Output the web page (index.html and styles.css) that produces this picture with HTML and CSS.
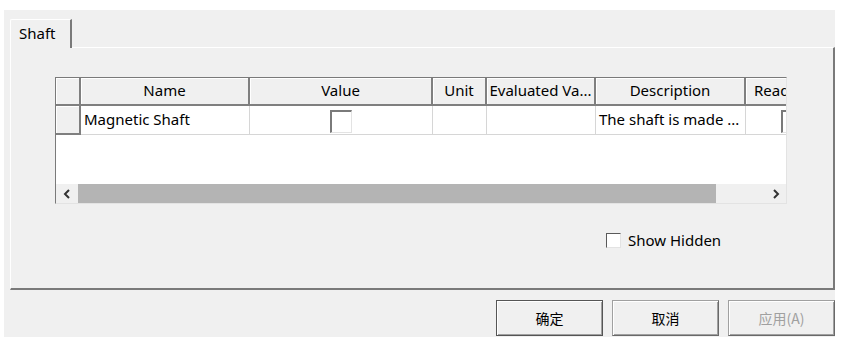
FILE: index.html
```html
<!DOCTYPE html>
<html lang="en">
<head>
  <meta charset="UTF-8" />
  <title>Shaft Properties</title>
  <link rel="stylesheet" href="styles.css">
</head>
<body>
  <div class="window">
    <div class="tab-strip">
      <div class="tab">Shaft</div>
      <div class="tab-fill"></div>
    </div>

    <div class="panel">
      <div class="grid">
        <div class="grid-row grid-head">
          <div class="row-head"></div>
          <div class="head-cell">Name</div>
          <div class="head-cell">Value</div>
          <div class="head-cell">Unit</div>
          <div class="head-cell">Evaluated Va...</div>
          <div class="head-cell">Description</div>
          <div class="head-cell head-clip">Read Only</div>
        </div>
        <div class="grid-row grid-data">
          <div class="row-head"></div>
          <div class="cell">Magnetic Shaft</div>
          <div class="cell cell-center"><span class="cell-check"></span></div>
          <div class="cell"></div>
          <div class="cell"></div>
          <div class="cell">The shaft is made ...</div>
          <div class="cell cell-center"><span class="cell-check"></span></div>
        </div>
        <div class="grid-empty"></div>
        <div class="hscroll">
          <div class="arrow">
            <svg width="8" height="10" viewBox="0 0 8 10"><path d="M6 1 L2 5 L6 9" fill="none" stroke="#333" stroke-width="2"/></svg>
          </div>
          <div class="track"><div class="thumb"></div></div>
          <div class="arrow">
            <svg width="8" height="10" viewBox="0 0 8 10"><path d="M2 1 L6 5 L2 9" fill="none" stroke="#333" stroke-width="2"/></svg>
          </div>
        </div>
      </div>

      <label class="option">
        <span class="check-box"></span>
        <span>Show Hidden</span>
      </label>
    </div>

    <div class="buttons">
      <button class="btn btn-default">确定</button>
      <button class="btn">取消</button>
      <button class="btn" disabled>应用(A)</button>
    </div>
  </div>
</body>
</html>
```

FILE: styles.css
```css
* {
  box-sizing: border-box;
}

body {
  margin: 0;
  background: #fff;
  font-family: "Noto Sans", "Noto Sans CJK SC", sans-serif;
  font-size: 15px;
  color: #000;
}

.window {
  margin: 10px 0 0 4px;
  width: 831px;
  height: 327px;
  padding: 9px 0 0 6px;
  background: #f0f0f0;
}

/* tab header */
.tab-strip {
  display: flex;
  height: 29px;
}

.tab {
  width: 62px;
  padding: 3px 0 0 8px;
  border-top: 1px solid #fff;
  border-left: 1px solid #fff;
  border-right: 2px solid #7a7a7a;
  border-top-left-radius: 2px;
}

.tab-fill {
  flex: 1;
  border-bottom: 1px solid #fff;
  border-right: 2px solid #7a7a7a;
  margin-top: 28px;
}

.panel {
  width: 825px;
  height: 242px;
  padding: 29px 0 0 44px;
  border-left: 1px solid #fff;
  border-right: 2px solid #7a7a7a;
  border-bottom: 2px solid #7a7a7a;
}

/* property grid */
.grid {
  width: 732px;
  height: 127px;
  display: flex;
  flex-direction: column;
  background: #fff;
  border-top: 1px solid #7a7a7a;
  border-left: 1px solid #7a7a7a;
  border-right: 1px solid #e3e3e3;
  border-bottom: 1px solid #e3e3e3;
  overflow: hidden;
}

.grid-row {
  display: grid;
  grid-template-columns: 25px 169px 183px 54px 109px 150px 92px;
  flex-shrink: 0;
}

.grid-head {
  height: 28px;
}

.grid-data {
  height: 29px;
}

.row-head,
.head-cell {
  background: #f0f0f0;
  border-right: 2px solid #7f7f7f;
  border-bottom: 2px solid #7f7f7f;
  box-shadow: inset 1px 1px #fff;
}

.head-cell {
  text-align: center;
  line-height: 25px;
  white-space: nowrap;
  overflow: hidden;
}

.head-clip {
  text-align: left;
  padding-left: 8px;
}

.cell {
  border-right: 1px solid #d6d6d6;
  border-bottom: 1px solid #d6d6d6;
  padding-left: 3px;
  line-height: 27px;
  white-space: nowrap;
  overflow: hidden;
}

.cell-center {
  display: flex;
  justify-content: center;
  align-items: center;
  padding-left: 0;
}

.cell-check {
  width: 22px;
  height: 23px;
  margin-top: 3px;
  background: #fff;
  border-top: 2px solid #7a7a7a;
  border-left: 2px solid #7a7a7a;
  border-right: 1px solid #e3e3e3;
  border-bottom: 1px solid #e3e3e3;
}

.grid-empty {
  flex: 1;
}

.hscroll {
  height: 19px;
  display: flex;
  background: #f0f0f0;
  flex-shrink: 0;
}

.arrow {
  width: 21px;
  display: flex;
  align-items: center;
  justify-content: center;
}

.track {
  flex: 1;
  padding: 0 49px 0 1px;
}

.thumb {
  height: 100%;
  background: #b4b4b4;
}

/* show hidden option */
.option {
  display: flex;
  align-items: center;
  gap: 7px;
  margin: 26px 0 0 551px;
  width: 140px;
}

.check-box {
  width: 15px;
  height: 15px;
  background: #fff;
  border-top: 1px solid #5a5a5a;
  border-left: 1px solid #5a5a5a;
  border-right: 1px solid #e3e3e3;
  border-bottom: 1px solid #e3e3e3;
}

/* dialog buttons */
.buttons {
  display: flex;
  justify-content: flex-end;
  gap: 9px;
  margin-top: 10px;
}

.btn {
  width: 107px;
  height: 36px;
  font-family: "Noto Sans CJK SC", sans-serif;
  font-size: 14px;
  color: #000;
  background: #f0f0f0;
  border: 1px solid #a0a0a0;
  border-right-color: #696969;
  border-bottom-color: #696969;
  box-shadow: inset 1px 1px #fff, inset -1px -1px #a0a0a0;
  padding: 0;
}

.btn-default {
  border-color: #555;
}

.btn:disabled {
  color: #a0a0a0;
}
```
